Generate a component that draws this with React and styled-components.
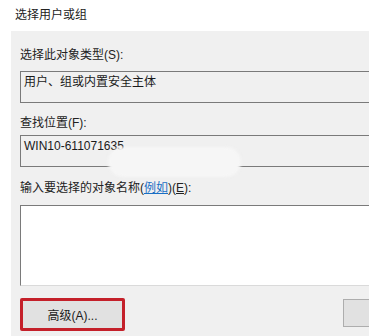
import React from "react";
import styled, { createGlobalStyle } from "styled-components";

const Global = createGlobalStyle`
  html, body {
    margin: 0;
    padding: 0;
    background: #fff;
  }
  body {
    font-family: "Liberation Sans", "Noto Sans CJK SC", sans-serif;
    font-size: 12px;
    color: #1a1a1a;
  }
`;

const Page = styled.div`
  width: 369px;
  height: 336px;
  overflow: hidden;
  background: #fff;
`;

const Title = styled.div`
  height: 31px;
  line-height: 31px;
  padding-left: 15px;
  color: #222;
`;

const Panel = styled.div`
  margin-left: 11px;
  width: 420px;
  height: 305px;
  background: #f0f0f0;
  padding: 0 0 0 9px;
  box-sizing: border-box;
  display: flex;
  flex-direction: column;
`;

const Label = styled.div`
  height: 16px;
  line-height: 16px;
  margin-top: ${({ $top }) => $top}px;
  color: #222;
`;

const Key = styled.span`
  text-decoration: underline;
`;

const Link = styled.span`
  color: #1a6fc4;
  text-decoration: underline;
`;

const Field = styled.div`
  position: relative;
  margin-top: ${({ $top }) => $top}px;
  height: 32px;
  box-sizing: border-box;
  border: 1px solid #7a7a7a;
  border-right: none;
  background: #f0f0f0;
  padding: 2px 3px;
  line-height: 16px;
  color: #1a1a1a;
`;

const Smudge = styled.div`
  position: absolute;
  left: 87px;
  top: 11px;
  width: 133px;
  height: 30px;
  border-radius: 15px;
  background: #f6f6f6;
  filter: blur(1.5px);
`;

const TextBox = styled.div`
  margin-top: 9px;
  height: 81px;
  box-sizing: border-box;
  background: #fff;
  border-top: 1px solid #7a7a7a;
  border-left: 1px solid #7a7a7a;
  border-bottom: 1px solid #dadada;
`;

const ButtonRow = styled.div`
  margin-top: 12px;
  display: flex;
  align-items: flex-start;
  gap: 218px;
`;

const Button = styled.div`
  box-sizing: border-box;
  width: ${({ $w }) => $w}px;
  height: ${({ $h }) => $h}px;
  margin-top: ${({ $top }) => $top || 0}px;
  background: #e1e1e1;
  border: ${({ $marked }) =>
    $marked ? "3px solid #c4202a" : "1px solid #adadad"};
  border-radius: ${({ $marked }) => ($marked ? "2px" : "0")};
  display: flex;
  align-items: center;
  justify-content: center;
  color: #1a1a1a;
`;

export default function App() {
  return (
    <Page>
      <Global />
      <Title>选择用户或组</Title>
      <Panel>
        <Label $top={16}>选择此对象类型(S):</Label>
        <Field $top={8}>用户、组或内置安全主体</Field>
        <Label $top={12}>查找位置(F):</Label>
        <Field $top={4}>
          WIN10-611071635
          <Smudge />
        </Field>
        <Label $top={13}>
          输入要选择的对象名称(<Link>例如</Link>)(<Key>E</Key>):
        </Label>
        <TextBox />
        <ButtonRow>
          <Button $w={105} $h={33} $marked>
            高级(A)...
          </Button>
          <Button $w={75} $h={28} $top={1} />
        </ButtonRow>
      </Panel>
    </Page>
  );
}
